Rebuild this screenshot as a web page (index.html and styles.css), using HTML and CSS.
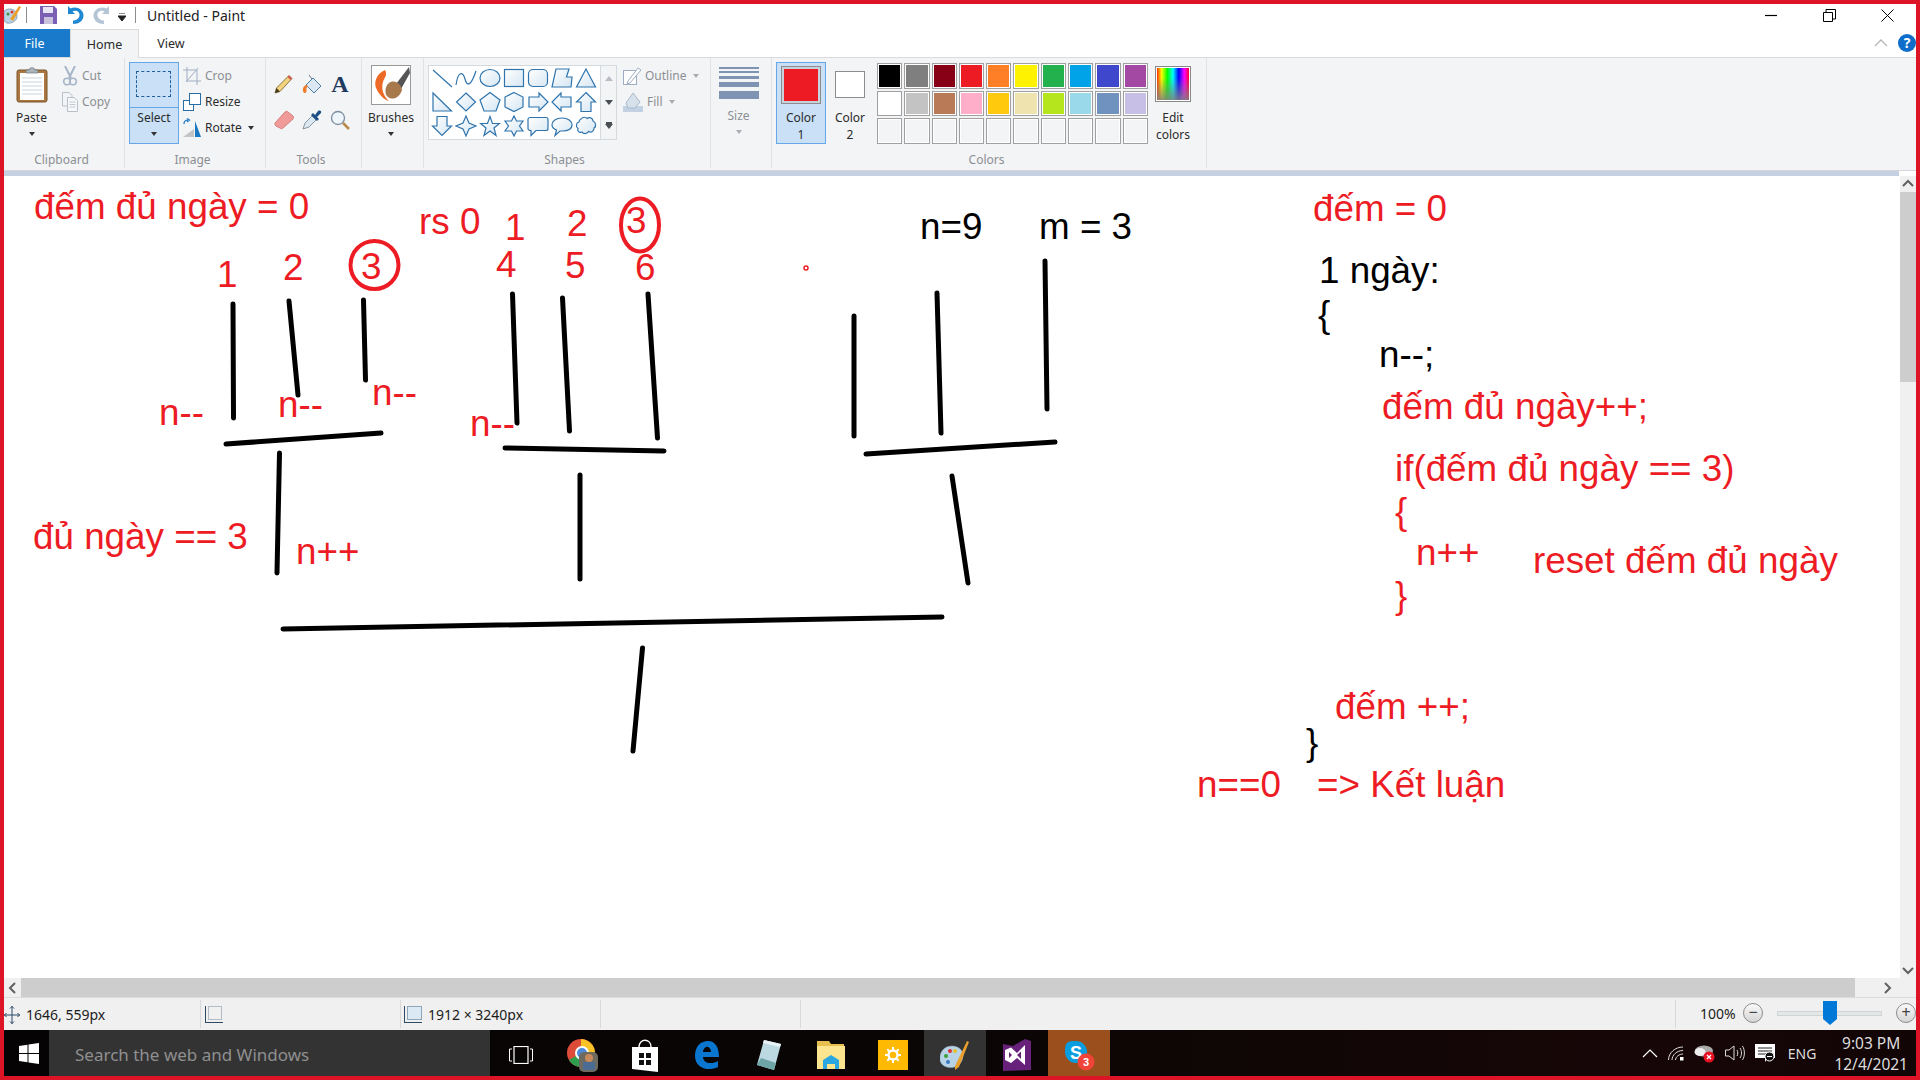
FILE: index.html
```html
<!DOCTYPE html>
<html lang="en">
<head>
    <meta charset="UTF-8">
    <title>Untitled - Paint</title>
    <link rel="stylesheet" href="styles.css">
</head>
<body>
<div class="window">

    <!-- title bar -->
    <div class="titlebar">
        <svg class="ic-app" width="18" height="22" viewBox="0 0 18 22"><path d="M0 7C5 3 12 5 13 11C14 17 7 20 3 19C0 18 0 16 0 15Z" fill="#b9d3e6" stroke="#6d8ca3" stroke-width=".7"/><path d="M6 15L15 2L17 3L9 17Z" fill="#e9a02e"/><circle cx="4" cy="10" r="1.5" fill="#3c8f3c"/><circle cx="8" cy="8" r="1.5" fill="#d33"/></svg>
        <span class="qa-sep"></span>
        <svg class="qa-save" width="17" height="18" viewBox="0 0 17 18"><path d="M0 0H14L17 3V18H0Z" fill="#7b5fb5"/><rect x="3" y="1" width="10" height="6" fill="#e9e6f4"/><rect x="4" y="11" width="9" height="7" fill="#c9c3dc"/></svg>
        <svg class="qa-undo" width="17" height="20" viewBox="0 0 17 20"><path d="M1 1V9H8L5.5 6.500C9 4.500 13 7 12.500 10.500C12 14 9 15.500 6 15.500V19C12 19 16.500 15.500 16.500 10.500C16.500 4 9 0.500 3.500 3.500Z" fill="#1e88d2"/></svg>
        <svg class="qa-redo" width="17" height="20" viewBox="0 0 17 20"><path d="M16 1V9H9L11.500 6.500C8 4.500 4 7 4.500 10.500C5 14 8 15.500 11 15.500V19C5 19 .5 15.500 .5 10.500C.5 4 8 0.500 13.500 3.500Z" fill="#b4c6d6"/></svg>
        <svg class="qa-more" width="8" height="8" viewBox="0 0 8 8"><path d="M1 0H7M0 3H8L4 8Z" stroke="#222" stroke-width="1" fill="#222"/></svg>
        <span class="qa-sep qa-sep-end"></span>
        <span class="title">Untitled - Paint</span>
        <div class="win-controls">
            <svg width="13" height="13" viewBox="0 0 13 13"><path d="M0 6.500H12" stroke="#000" stroke-width="1.200"/></svg>
            <svg width="13" height="13" viewBox="0 0 13 13"><path d="M.5 3.500H9.500V12.500H.5ZM3 3.500V.5H12.500V10H9.500" fill="none" stroke="#000"/></svg>
            <svg width="13" height="13" viewBox="0 0 13 13"><path d="M.5 .5L12.500 12.500M12.500 .5L.5 12.500" stroke="#000"/></svg>
        </div>
    </div>

    <!-- tabs -->
    <div class="tabs">
        <div class="tab tab-file">File</div>
        <div class="tab tab-home">Home</div>
        <div class="tab tab-view">View</div>
        <div class="tabs-right">
            <svg width="14" height="8" viewBox="0 0 14 8"><path d="M1 7L7 1L13 7" fill="none" stroke="#b5b5b5" stroke-width="1.300"/></svg>
            <span class="help">?</span>
        </div>
    </div>

    <!-- ribbon -->
    <div class="ribbon">

        <section class="group group-clipboard">
            <div class="group-body">
                <div class="big-btn paste-btn">
                    <svg width="32" height="36" viewBox="0 0 32 36"><rect x="1" y="3" width="30" height="32" rx="2" fill="#a9773f" stroke="#7d5427"/><rect x="4" y="6" width="24" height="27" fill="#fff"/><path d="M6 11H26M6 15H26M6 19H26M6 23H26M6 27H26" stroke="#c9d3df"/><path d="M10 6V3H13C13 0 19 0 19 3H22V6Z" fill="#aab2ba" stroke="#6f767d" stroke-width=".7"/></svg>
                    <span class="btn-label">Paste</span>
                    <i class="caret"></i>
                </div>
                <div class="small-col">
                    <div class="small-btn off">
                        <svg width="16" height="20" viewBox="0 0 16 20"><path d="M3 0L9 12M13 0L7 12" stroke="#a7b6c8" stroke-width="2"/><circle cx="5" cy="15.500" r="3.300" fill="none" stroke="#a7b6c8" stroke-width="1.600"/><circle cx="11" cy="15.500" r="3.300" fill="none" stroke="#a7b6c8" stroke-width="1.600"/></svg>
                        <span>Cut</span>
                    </div>
                    <div class="small-btn off">
                        <svg width="16" height="20" viewBox="0 0 16 20"><path d="M.5 .5H7L10 3.500V14H.5Z" fill="#f2f4f7" stroke="#b7c0cb"/><path d="M5.500 5.500H12L15.500 8.500V19.500H5.500Z" fill="#f7f8fa" stroke="#b7c0cb"/><path d="M7.500 10H13.500M7.500 12.500H13.500M7.500 15H13.500" stroke="#c3cad3"/></svg>
                        <span>Copy</span>
                    </div>
                </div>
            </div>
            <div class="group-label">Clipboard</div>
        </section>

        <section class="group group-image">
            <div class="group-body">
                <div class="select-btn">
                    <div class="select-top"><span class="marquee"></span></div>
                    <div class="select-bottom">
                        <span class="btn-label">Select</span>
                        <i class="caret"></i>
                    </div>
                </div>
                <div class="small-col">
                    <div class="small-btn off">
                        <svg width="18" height="20" viewBox="0 0 18 20"><path d="M4 1V15H18M0 4H14V19M3 16L15 2" fill="none" stroke="#9eaec2"/></svg>
                        <span>Crop</span>
                    </div>
                    <div class="small-btn">
                        <svg width="18" height="18" viewBox="0 0 18 18"><rect x=".5" y="7.500" width="10" height="10" fill="#fff" stroke="#2a6ea6"/><rect x="6.500" y=".5" width="11" height="11" fill="#fff" stroke="#2a6ea6"/></svg>
                        <span>Resize</span>
                    </div>
                    <div class="small-btn">
                        <svg width="18" height="20" viewBox="0 0 18 20"><path d="M0 19L11 11V19Z" fill="#c4c4c4"/><path d="M12 3L18 19H12Z" fill="#1a78c2"/><path d="M1 6C1 3 3 2 5 2M4 .5L6.500 2L4 4" fill="none" stroke="#1a78c2" stroke-width="1.200"/></svg>
                        <span>Rotate</span>
                        <i class="caret caret-side"></i>
                    </div>
                </div>
            </div>
            <div class="group-label">Image</div>
        </section>

        <section class="group group-tools">
            <div class="group-body tools-grid">
                <svg width="20" height="20" viewBox="0 0 20 20"><path d="M1 19L2.500 14L15 1.500L18 4.500L6 17.500Z" fill="#f2d27a" stroke="#6b5a2a" stroke-width=".8"/><path d="M15 1.500L18 4.500L16.500 6L13.500 3Z" fill="#d9534f"/><path d="M1 19L2.500 14L6 17.500Z" fill="#4a3b22"/></svg>
                <svg width="20" height="20" viewBox="0 0 20 20"><path d="M4 11L11 4L19 12L12 19Z" fill="#dbe7f2" stroke="#4f7fa8"/><path d="M10 5L7 1" stroke="#777"/><path d="M4 11C0 12 0 19 3 19C6 19 3 14 6 12Z" fill="#ef7d2d"/></svg>
                <span class="tool-text">A</span>
                <svg width="20" height="20" viewBox="0 0 20 20"><path d="M1 13L11 2C12 1 13 1 14 2L19 6C20 7 20 8 19 9L9 18C8 19 7 19 6 18L2 16C1 15 .5 14 1 13Z" fill="#f09a9a" stroke="#d47d7d"/></svg>
                <svg width="20" height="20" viewBox="0 0 20 20"><path d="M1 19L3 13L10 6L14 10L7 17Z" fill="#dce7ef" stroke="#6b8192" stroke-width=".8"/><path d="M9 5L15 11L17 9L15 7L19 3C20 1 18 0 16 1L13 5L11 3Z" fill="#1d4f86"/></svg>
                <svg width="20" height="20" viewBox="0 0 20 20"><circle cx="8" cy="8" r="6.500" fill="#eef5fb" stroke="#7c8ea0" stroke-width="1.300"/><path d="M13 13L19 19" stroke="#b88a4a" stroke-width="2.500"/></svg>
            </div>
            <div class="group-label">Tools</div>
        </section>

        <section class="group group-brushes">
            <div class="group-body">
                <div class="big-btn">
                    <svg class="brush-thumb" width="40" height="40" viewBox="0 0 40 40"><rect x=".5" y=".5" width="39" height="39" fill="#fff" stroke="#999"/><path d="M38 2L25 19L30 24L39 8Z" fill="#555"/><path d="M18 18C24 14 30 19 31 25C29 32 22 36 17 32C13 29 14 21 18 18Z" fill="#a8794a"/><path d="M14 5C5 9 2 18 6 25C9 31 14 35 18 36C12 31 10 23 12 17C13 13 17 10 14 5Z" fill="#ec6a25"/></svg>
                    <span class="btn-label">Brushes</span>
                    <i class="caret"></i>
                </div>
            </div>
            <div class="group-label"></div>
        </section>

        <section class="group group-shapes">
            <div class="group-body">
                <svg class="defs" width="0" height="0"><defs><linearGradient id="sf" x1="0" y1="0" x2="1" y2="1"><stop offset="0" stop-color="#fff"/><stop offset="1" stop-color="#d5e6f3"/></linearGradient></defs></svg>
                <div class="shape-box">
                    <div class="shape-grid">
                        <svg viewBox="0 0 22 22"><path d="M2 3L21 20"/></svg>
                        <svg viewBox="0 0 22 22"><path class="open" d="M1 18C3 4 8 4 10 12S16 19 21 4"/></svg>
                        <svg viewBox="0 0 22 22"><ellipse cx="11" cy="11" rx="10" ry="8.500"/></svg>
                        <svg viewBox="0 0 22 22"><rect x="1.500" y="2.500" width="19" height="17"/></svg>
                        <svg viewBox="0 0 22 22"><rect x="1.500" y="2.500" width="19" height="17" rx="4.500"/></svg>
                        <svg viewBox="0 0 22 22"><path d="M5 2H18L15.500 10H21L20 20H1Z"/></svg>
                        <svg viewBox="0 0 22 22"><path d="M11 2L20.500 20H1.500Z"/></svg>
                        <svg viewBox="0 0 22 22"><path d="M2 2L20.500 20H2Z"/></svg>
                        <svg viewBox="0 0 22 22"><path d="M11 2L20.500 11L11 20L1.500 11Z"/></svg>
                        <svg viewBox="0 0 22 22"><path d="M11 1.500L21 9L17 20H5L1 9Z"/></svg>
                        <svg viewBox="0 0 22 22"><path d="M11 1.500L20 6V16L11 20.500L2 16V6Z"/></svg>
                        <svg viewBox="0 0 22 22"><path d="M2 6H12V2L21 11L12 20V16H2Z"/></svg>
                        <svg viewBox="0 0 22 22"><path d="M20 6H10V2L1 11L10 20V16H20Z"/></svg>
                        <svg viewBox="0 0 22 22"><path d="M11 1.500L20.500 11H16V20.500H6V11H1.500Z"/></svg>
                        <svg viewBox="0 0 22 22"><path d="M6 1.500H16V11H20.500L11 20.500L1.500 11H6Z"/></svg>
                        <svg viewBox="0 0 22 22"><path d="M11 1L14 8L21 11L14 14L11 21L8 14L1 11L8 8Z"/></svg>
                        <svg viewBox="0 0 22 22"><path d="M11 1.500L13.500 8.500H20.500L15 13L17 20.500L11 16L5 20.500L7 13L1.500 8.500H8.500Z"/></svg>
                        <svg viewBox="0 0 22 22"><path d="M11 1L13.500 6H20L16.500 11L20 16H13.500L11 21L8.500 16H2L5.500 11L2 6H8.500Z"/></svg>
                        <svg viewBox="0 0 22 22"><path d="M3 2.500H19C20 2.500 21 3.500 21 4.500V13.500C21 14.500 20 15.500 19 15.500H9L4 20.500V15.500H3C2 15.500 1 14.500 1 13.500V4.500C1 3.500 2 2.500 3 2.500Z"/></svg>
                        <svg viewBox="0 0 22 22"><path d="M11 3C17 3 21 6 21 10S17 16 11 16H9L4 20.500L5.500 15C3 14 1 12.500 1 10C1 6 5 3 11 3Z"/></svg>
                        <svg viewBox="0 0 22 22"><path d="M6 4C8 1.500 11 2 12 3.500C14 1.500 18 3 18 6C21 7 21.500 12 19 13C19.500 16 16 18 13.500 16.500C12 19.500 8 19 7 17C4 18.500 2 15.500 3 13.500C.5 12 1 7.500 4 7C4 5.500 5 4.500 6 4Z"/></svg>
                    </div>
                    <div class="shape-scroll">
                        <i class="tri-up"></i>
                        <i class="tri-down"></i>
                        <i class="tri-more"></i>
                    </div>
                </div>
                <div class="small-col small-col-shape">
                    <div class="small-btn off">
                        <svg width="18" height="18" viewBox="0 0 18 18"><rect x=".5" y="3.500" width="13" height="14" fill="#fff" stroke="#9eaec2"/><path d="M5 14L15 1L18 3L7 16L4 17Z" fill="#fff" stroke="#9eaec2"/></svg>
                        <span>Outline</span>
                        <i class="caret caret-side caret-off"></i>
                    </div>
                    <div class="small-btn off">
                        <svg width="20" height="20" viewBox="0 0 20 20"><rect x="0" y="14" width="20" height="6" fill="#c3d2e2"/><path d="M3 11L10 1L17 10L12 16H5Z" fill="#d6e1ec" stroke="#a9b9ca"/></svg>
                        <span>Fill</span>
                        <i class="caret caret-side caret-off"></i>
                    </div>
                </div>
            </div>
            <div class="group-label">Shapes</div>
        </section>

        <section class="group group-size">
            <div class="group-body">
                <div class="big-btn size-btn">
                    <div class="size-lines">
                        <span class="w1"></span><span class="w2"></span><span class="w3"></span><span class="w4"></span><span class="w5"></span>
                    </div>
                    <span class="btn-label off-text">Size</span>
                    <i class="caret caret-off"></i>
                </div>
            </div>
            <div class="group-label"></div>
        </section>

        <section class="group group-colors">
            <div class="group-body">
                <div class="color-btn color-on">
                    <span class="swatch-frame"><span class="swatch swatch-red"></span></span>
                    <span class="btn-label">Color<br>1</span>
                </div>
                <div class="color-btn color-two">
                    <span class="swatch swatch-white"></span>
                    <span class="btn-label">Color<br>2</span>
                </div>
                <div class="palette">
                    <span class="c01"></span><span class="c02"></span><span class="c03"></span><span class="c04"></span><span class="c05"></span><span class="c06"></span><span class="c07"></span><span class="c08"></span><span class="c09"></span><span class="c10"></span>
                    <span class="c11"></span><span class="c12"></span><span class="c13"></span><span class="c14"></span><span class="c15"></span><span class="c16"></span><span class="c17"></span><span class="c18"></span><span class="c19"></span><span class="c20"></span>
                    <span></span><span></span><span></span><span></span><span></span><span></span><span></span><span></span><span></span><span></span>
                </div>
                <div class="edit-colors">
                    <span class="rainbow"></span>
                    <span class="btn-label">Edit<br>colors</span>
                </div>
            </div>
            <div class="group-label">Colors</div>
        </section>
    </div>

    <div class="strip"></div>

    <!-- canvas, free drawing so everything is placed by coordinates -->
    <div class="canvas-row">
        <svg class="canvas" width="1896" height="802" viewBox="4 176 1896 802">
            <g class="strokes">
                <path d="M233 304L233.500 418"/>
                <path d="M289 301L298 395"/>
                <path d="M363.500 300L365.500 380"/>
                <path d="M226 444L381 433"/>
                <path d="M279.500 453L277 573"/>
                <path d="M512.500 294L517 423"/>
                <path d="M562.500 298L569.500 431"/>
                <path d="M648 294L657.500 438"/>
                <path d="M505 448L664 451"/>
                <path d="M580 475V579"/>
                <path d="M854 316V436"/>
                <path d="M937 293L941 433"/>
                <path d="M1045 261L1047 409"/>
                <path d="M866 454L1055 442"/>
                <path d="M952 476L968 583"/>
                <path d="M283 629L942 617"/>
                <path d="M642.500 648L633 751"/>
            </g>
            <g class="circles">
                <ellipse cx="374.500" cy="265" rx="24" ry="24"/>
                <ellipse cx="640" cy="225" rx="19" ry="26.500"/>
                <circle class="speck" cx="806" cy="268" r="2"/>
            </g>
            <g class="pen-red">
                <text x="34" y="219">đếm đủ ngày = 0</text>
                <text x="419" y="234">rs 0</text>
                <text x="505" y="240">1</text>
                <text x="567" y="236">2</text>
                <text x="626" y="233">3</text>
                <text x="217" y="287">1</text>
                <text x="283" y="280">2</text>
                <text x="361" y="279">3</text>
                <text x="496" y="277">4</text>
                <text x="565" y="278">5</text>
                <text x="635" y="280">6</text>
                <text x="159" y="425">n--</text>
                <text x="278" y="417">n--</text>
                <text x="372" y="405">n--</text>
                <text x="470" y="436">n--</text>
                <text x="33" y="549">đủ ngày == 3</text>
                <text x="296" y="564">n++</text>
                <text x="1313" y="221">đếm = 0</text>
                <text x="1382" y="419">đếm đủ ngày++;</text>
                <text x="1395" y="481">if(đếm đủ ngày == 3)</text>
                <text x="1395" y="524">{</text>
                <text x="1416" y="565">n++</text>
                <text x="1533" y="573">reset đếm đủ ngày</text>
                <text x="1395" y="608">}</text>
                <text x="1335" y="719">đếm ++;</text>
                <text x="1197" y="797">n==0</text>
                <text x="1317" y="797">=&gt; Kết luận</text>
            </g>
            <g class="pen-black">
                <text x="920" y="239">n=9</text>
                <text x="1039" y="239">m = 3</text>
                <text x="1319" y="283">1 ngày:</text>
                <text x="1318" y="327">{</text>
                <text x="1379" y="367">n--;</text>
                <text x="1306" y="755">}</text>
            </g>
        </svg>
        <div class="vscroll">
            <svg class="arrow" width="16" height="16" viewBox="0 0 16 16"><path d="M3 10L8 5L13 10" fill="none" stroke="#606060" stroke-width="2"/></svg>
            <div class="vthumb"></div>
            <div class="vtrack"></div>
            <svg class="arrow" width="16" height="16" viewBox="0 0 16 16"><path d="M3 6L8 11L13 6" fill="none" stroke="#606060" stroke-width="2"/></svg>
        </div>
    </div>

    <div class="hscroll">
        <svg class="arrow-h" width="17" height="19" viewBox="0 0 17 19"><path d="M11 5L6 10L11 15" fill="none" stroke="#606060" stroke-width="2"/></svg>
        <div class="hthumb"></div>
        <svg class="arrow-h arrow-right" width="17" height="19" viewBox="0 0 17 19"><path d="M6 5L11 10L6 15" fill="none" stroke="#606060" stroke-width="2"/></svg>
    </div>

    <!-- status bar -->
    <div class="status">
        <div class="cell cell-pos">
            <svg width="16" height="18" viewBox="0 0 16 18"><path d="M8 0V18M0 9H16M6 2.500L8 .5L10 2.500M6 15.500L8 17.500L10 15.500M2.500 7L.5 9L2.500 11M13.500 7L15.500 9L13.500 11" fill="none" stroke="#2c4a66"/></svg>
            <span>1646, 559px</span>
        </div>
        <div class="cell cell-sel">
            <svg width="18" height="18" viewBox="0 0 18 18"><path d="M.5 0V17M0 16.500H18" stroke="#2c4a66"/><rect x="3.500" y=".5" width="13" height="13" fill="none" stroke="#7b8794" stroke-dasharray="1 1"/></svg>
        </div>
        <div class="cell cell-size">
            <svg width="18" height="18" viewBox="0 0 18 18"><path d="M.5 0V17M0 16.500H18" stroke="#2c4a66"/><rect x="3.500" y=".5" width="14" height="13" fill="#dbe9f4" stroke="#8fa5b8"/></svg>
            <span>1912 × 3240px</span>
        </div>
        <div class="cell cell-wide"></div>
        <div class="cell cell-rest"></div>
        <div class="zoom">
            <span class="zoom-value">100%</span>
            <span class="zoom-btn">−</span>
            <div class="zoom-track"><svg class="zoom-thumb" width="14" height="24" viewBox="0 0 14 24"><path d="M0 0H14V18L7 24L0 18Z" fill="#0078d7"/></svg></div>
            <span class="zoom-btn">+</span>
        </div>
    </div>

    <!-- taskbar -->
    <div class="taskbar">
        <div class="start">
            <svg width="20" height="21" viewBox="0 0 20 21"><path d="M0 3L8.500 1.800V10H0ZM9.500 1.600L20 0V10H9.500ZM0 11H8.500V19.200L0 18ZM9.500 11H20V21L9.500 19.400Z" fill="#fff"/></svg>
        </div>
        <div class="search">Search the web and Windows</div>
        <div class="task">
            <svg width="24" height="18" viewBox="0 0 24 18"><rect x="5" y=".5" width="14" height="17" fill="none" stroke="#fff" stroke-width="1.200"/><path d="M3 3H.5V15H3M21 3H23.500V15H21" fill="none" stroke="#fff"/></svg>
        </div>
        <div class="task">
            <svg width="32" height="34" viewBox="0 0 32 34"><circle cx="14" cy="15" r="14" fill="#dd4b39"/><path d="M14 15L2 22A14 14 0 0 0 14 29Z" fill="#2e9e4f"/><path d="M14 1A14 14 0 0 1 27 20L14 15Z" fill="#f7c325"/><circle cx="15" cy="15" r="6" fill="#4a89dc" stroke="#fff" stroke-width="2"/><rect x="12" y="14" width="19" height="20" rx="5" fill="#6d6a5f"/><circle cx="22" cy="20" r="4" fill="#c98a5b"/><rect x="16" y="24" width="12" height="8" fill="#4c6c93"/></svg>
        </div>
        <div class="task">
            <svg width="26" height="34" viewBox="0 0 26 34"><path d="M7 9C7 0 19 0 19 9" fill="none" stroke="#fff" stroke-width="1.400"/><path d="M0 9H26V34L0 31Z" fill="#fff"/><path d="M7 15H12V20H7ZM14 15H19V20H14ZM7 22H12V27H7ZM14 22H19V27H14Z" fill="#111"/></svg>
        </div>
        <div class="task">
            <svg width="26" height="30" viewBox="0 0 26 30"><path d="M1 16C1 6 7 1 14 1C21 1 25 7 25 17H9C9 23 17 25 24 21V27C14 32 1 28 1 16ZM9 12H17C17 8 14 6 12 7C10 8 9 10 9 12Z" fill="#0b76d0"/></svg>
        </div>
        <div class="task">
            <svg width="26" height="32" viewBox="0 0 26 32"><path d="M8 1L25 5L18 31L1 26Z" fill="#bcd9e2"/><path d="M1 26L18 31L20 24L5 19Z" fill="#6ea5a6"/><path d="M8 1L25 5L24 8L7 4Z" fill="#e8f2f3"/></svg>
        </div>
        <div class="task">
            <svg width="28" height="30" viewBox="0 0 28 30"><path d="M0 1H12L14 4H27V29H0Z" fill="#e6bf4f"/><path d="M0 6H28V29H0Z" fill="#fde58f"/><path d="M6 29V20L14 15L22 20V29H18V24H10V29Z" fill="#2ba6e0"/></svg>
        </div>
        <div class="task">
            <span class="tile">
                <svg width="16" height="16" viewBox="0 0 16 16"><circle cx="8" cy="8" r="4.500" fill="none" stroke="#fff" stroke-width="2.400"/><path d="M8 0V3M8 13V16M0 8H3M13 8H16M2.300 2.300L4.500 4.500M11.500 11.500L13.700 13.700M2.300 13.700L4.500 11.500M11.500 4.500L13.700 2.300" stroke="#fff" stroke-width="2"/></svg>
            </span>
        </div>
        <div class="task task-active">
            <svg width="30" height="32" viewBox="0 0 30 32"><path d="M0 17C2 7 12 5 19 9C25 13 24 23 17 27C9 31 -2 27 0 17Z" fill="#b9d3e6" stroke="#8aa5b8" stroke-width=".6"/><path d="M15 27L27 2L29 3L19 28L15 31Z" fill="#e9a02e"/><circle cx="6" cy="17" r="2" fill="#3c9f3c"/><circle cx="10" cy="12" r="2" fill="#d33"/><circle cx="15" cy="12" r="2" fill="#e4c22c"/><circle cx="8" cy="23" r="2" fill="#3a7ac2"/></svg>
        </div>
        <div class="task">
            <svg width="28" height="32" viewBox="0 0 28 32"><path d="M0 5L10 7L22 0L28 2V31L0 32Z" fill="#68217a"/><path d="M2 11L8 8.500L14 14L22 6V26L14 19L8 24L2 21ZM6 13V19L9 16ZM18 12.500L14 16L18 20Z" fill="#fff"/></svg>
        </div>
        <div class="task task-alert">
            <svg width="32" height="32" viewBox="0 0 32 32"><circle cx="9" cy="9" r="7" fill="#0a9ee0"/><circle cx="17" cy="17" r="7" fill="#0a9ee0"/><rect x="2" y="2" width="22" height="22" rx="11" fill="#0a9ee0"/><text x="13" y="20" class="skype-s">S</text><circle cx="23" cy="23" r="8.500" fill="#f04438"/><text x="23" y="27" class="skype-count">3</text></svg>
        </div>
        <div class="tray">
            <svg width="16" height="9" viewBox="0 0 16 9"><path d="M1 8L8 1L15 8" fill="none" stroke="#fff" stroke-width="1.200"/></svg>
            <svg width="16" height="15" viewBox="0 0 16 15"><path d="M.5 14C.5 7 7 1 15 1M4 14C4 9 9 4.500 15 4.500M7.500 14C7.500 11 11 8 15 8" fill="none" stroke="#ddd"/><rect x="12" y="11" width="3.500" height="3.500" fill="#fff"/></svg>
            <svg width="21" height="19" viewBox="0 0 21 19"><ellipse cx="10" cy="7" rx="9" ry="5.500" fill="#aaa"/><ellipse cx="6" cy="8" rx="5.500" ry="4" fill="#eee"/><circle cx="15" cy="13" r="5.500" fill="#e81123"/><path d="M13 11L17 15M17 11L13 15" stroke="#fff" stroke-width="1.300"/></svg>
            <svg width="20" height="16" viewBox="0 0 20 16"><path d="M.5 5H4L9 1V15L4 11H.5Z" fill="none" stroke="#ddd"/><path d="M12 5C13 7 13 9 12 11M15 3C17 6 17 10 15 13M17.500 1C20 5 20 11 17.500 15" fill="none" stroke="#ddd"/></svg>
            <svg width="20" height="18" viewBox="0 0 20 18"><path d="M0 0H20V14H13L10 18V14H0Z" fill="#fff"/><path d="M3 4H17M3 7H17M3 10H11" stroke="#222"/><circle cx="14.500" cy="12.500" r="4.500" fill="#111" stroke="#fff"/><path d="M12 12.500H17" stroke="#fff"/></svg>
            <span class="lang">ENG</span>
            <div class="clock"><span>9:03 PM</span><span>12/4/2021</span></div>
        </div>
    </div>
</div>
</body>
</html>
```

FILE: styles.css
```css
* {
    margin: 0;
    padding: 0;
    box-sizing: border-box;
}

body {
    font-family: 'Noto Sans', 'Open Sans', sans-serif;
    font-size: 12px;
    color: #2b2b2b;
    background: #fff;
}

.window {
    width: 1920px;
    height: 1080px;
    border: 4px solid #dc1426;
    display: flex;
    flex-direction: column;
    overflow: hidden;
    background: #fff;
}

/* title bar */
.titlebar {
    height: 25px;
    display: flex;
    align-items: center;
    flex-shrink: 0;
    padding-bottom: 3px;
}

.qa-sep {
    width: 1px;
    height: 16px;
    background: #8c8c8c;
    margin-left: 4px;
}

.qa-save {
    margin-left: 13px;
}

.qa-undo {
    margin-left: 10px;
}

.qa-redo {
    margin-left: 9px;
}

.qa-more {
    margin-left: 8px;
    margin-top: 3px;
}

.qa-sep-end {
    margin-left: 9px;
}

.title {
    margin-left: 11px;
    font-size: 14px;
    color: #222;
}

.win-controls {
    margin-left: auto;
    margin-right: 22px;
    display: flex;
    gap: 45px;
}

/* tabs */
.tabs {
    height: 29px;
    display: flex;
    flex-shrink: 0;
    border-bottom: 1px solid #dadbdc;
    font-size: 12.500px;
}

.tab {
    display: flex;
    align-items: center;
    justify-content: center;
}

.tab-file {
    width: 66px;
    background: #1979ca;
    color: #fff;
    padding-right: 5px;
}

.tab-home {
    width: 69px;
    border: 1px solid #dadbdc;
    border-bottom: none;
    background: #f3f4f6;
    margin-bottom: -1px;
}

.tab-view {
    width: 69px;
    padding-right: 5px;
}

.tabs-right {
    margin-left: auto;
    display: flex;
    align-items: center;
    gap: 10px;
}

.help {
    width: 18px;
    height: 18px;
    border-radius: 50%;
    background: #0f6cc9;
    color: #fff;
    font-weight: bold;
    font-size: 14px;
    line-height: 18px;
    text-align: center;
}

/* ribbon */
.ribbon {
    height: 113px;
    display: flex;
    flex-shrink: 0;
    background: #f3f4f6;
    border-bottom: 1px solid #d5d7da;
}

.group {
    display: flex;
    flex-direction: column;
    padding-top: 4px;
    border-right: 1px solid #dfe1e4;
    height: 110px;
}

.group-body {
    height: 90px;
    display: flex;
}

.group-label {
    height: 16px;
    line-height: 16px;
    text-align: center;
    padding-right: 5px;
    color: #8b8f94;
}

.group-clipboard {
    width: 121px;
}

.group-image {
    width: 141px;
}

.group-tools {
    width: 96px;
}

.group-brushes {
    width: 62px;
}

.group-shapes {
    width: 287px;
}

.group-size {
    width: 61px;
}

.group-colors {
    width: 435px;
}

.btn-label {
    line-height: 17px;
    text-align: center;
    color: #2b2b2b;
}

.off-text {
    color: #8b8f94;
}

.caret {
    display: block;
    width: 0;
    height: 0;
    border-left: 3.500px solid transparent;
    border-right: 3.500px solid transparent;
    border-top: 4px solid #333;
    margin-top: 6px;
}

.caret-side {
    margin-top: 0;
    margin-left: 2px;
}

.caret-off {
    border-top-color: #a9adb2;
}

.big-btn {
    display: flex;
    flex-direction: column;
    align-items: center;
    padding-top: 5px;
}

.big-btn .btn-label {
    margin-top: 3px;
}

.paste-btn {
    width: 55px;
}

.paste-btn svg {
    margin-bottom: 3px;
}

.small-col {
    display: flex;
    flex-direction: column;
    gap: 5px;
    padding-top: 3px;
}

.small-btn {
    height: 21px;
    display: flex;
    align-items: center;
    gap: 4px;
    color: #2b2b2b;
}

.small-btn svg {
    flex-shrink: 0;
}

.small-btn.off {
    color: #8b8f94;
}

.group-clipboard .small-col {
    gap: 5px;
    margin-left: 3px;
}

/* select */
.group-image .group-body {
    padding-left: 4px;
}

.select-btn {
    width: 50px;
    height: 82px;
    background: #c9e0f7;
    border: 1px solid #66a7e8;
    display: flex;
    flex-direction: column;
    margin-right: 4px;
}

.select-top {
    height: 45px;
    border-bottom: 1px solid #66a7e8;
    padding: 8px 0 0 6px;
}

.marquee {
    display: block;
    width: 35px;
    height: 26px;
    border: 1px dashed #1d5f9e;
}

.select-bottom {
    display: flex;
    flex-direction: column;
    align-items: center;
    padding-top: 1px;
}

/* tools */
.tools-grid {
    display: grid;
    grid-template-columns: repeat(3, 20px);
    grid-template-rows: 20px 20px;
    column-gap: 8px;
    row-gap: 16px;
    padding: 12px 0 0 8px;
}

.tool-text {
    font-family: 'Liberation Serif', serif;
    font-size: 24px;
    font-weight: bold;
    line-height: 20px;
    color: #1f3a5f;
    text-align: center;
}

/* brushes */
.group-brushes .big-btn {
    width: 100%;
    padding: 3px 3px 0 0;
}

.brush-thumb {
    margin-bottom: 1px;
}

/* shapes */
.defs {
    position: absolute;
}

.group-shapes .group-body {
    padding-left: 4px;
}

.shape-box {
    width: 189px;
    height: 75px;
    margin-top: 3px;
    display: flex;
    border: 1px solid #d5dadf;
    background: #fff;
}

.shape-grid {
    width: 171px;
    display: grid;
    grid-template-columns: repeat(7, 24px);
    grid-template-rows: repeat(3, 24px);
    padding: 0 0 0 1px;
    align-items: center;
    justify-items: center;
}

.shape-grid svg {
    width: 22px;
    height: 22px;
}

.shape-grid svg > * {
    fill: url(#sf);
    stroke: #2f74ad;
    stroke-width: 1.200;
}

.shape-grid svg > .open {
    fill: none;
}

.shape-scroll {
    flex: 1;
    background: #f3f4f6;
    border-left: 1px solid #d5dadf;
    display: flex;
    flex-direction: column;
    align-items: center;
    justify-content: space-around;
}

.tri-up {
    border-left: 4px solid transparent;
    border-right: 4px solid transparent;
    border-bottom: 5px solid #b8bcc2;
}

.tri-down {
    border-left: 4px solid transparent;
    border-right: 4px solid transparent;
    border-top: 5px solid #4a4f55;
}

.tri-more {
    border-left: 4px solid transparent;
    border-right: 4px solid transparent;
    border-top: 5px solid #4a4f55;
    box-shadow: 0 -3px 0 -1px #4a4f55;
}

.small-col-shape {
    margin-left: 6px;
    gap: 5px;
    padding-top: 3px;
}

/* size */
.size-btn {
    width: 100%;
    padding-right: 5px;
}

.size-lines {
    width: 40px;
    height: 34px;
    display: flex;
    flex-direction: column;
    margin-bottom: 3px;
}

.size-lines span {
    display: block;
    background: #7f93b2;
}

.w1 { height: 2px; margin-bottom: 2px; }
.w2 { height: 2px; margin-bottom: 3px; }
.w3 { height: 3px; margin-bottom: 3px; }
.w4 { height: 5px; margin-bottom: 4px; }
.w5 { height: 8px; }

/* colors */
.group-colors .group-body {
    padding-left: 4px;
}

.color-btn {
    width: 50px;
    height: 82px;
    border: 1px solid transparent;
    display: flex;
    flex-direction: column;
    align-items: center;
}

.color-on {
    background: #c9e0f7;
    border-color: #66a7e8;
}

.swatch-frame {
    width: 40px;
    height: 41px;
    margin-top: 3px;
    border: 1px solid #8c8c8c;
    padding: 2px;
    background: #c9d3de;
    margin-bottom: 5px;
}

.swatch {
    display: block;
}

.swatch-red {
    width: 100%;
    height: 100%;
    background: #ed1c24;
}

.swatch-white {
    width: 30px;
    height: 30px;
    margin-top: 8px;
    margin-bottom: 11px;
    background: #fff;
    border: 1px solid #8c8c8c;
}

.color-two {
    width: 44px;
    margin-left: 2px;
}

.palette {
    display: grid;
    grid-template-columns: repeat(10, 25.300px);
    grid-template-rows: repeat(3, 25.500px);
    gap: 2px;
    margin-left: 5px;
    margin-top: 1px;
}

.palette span {
    display: block;
    border: 1px solid #a0a0a0;
    box-shadow: inset 0 0 0 1px #fff;
}

.c01 { background: #000; }
.c02 { background: #7f7f7f; }
.c03 { background: #880015; }
.c04 { background: #ed1c24; }
.c05 { background: #ff7f27; }
.c06 { background: #fff200; }
.c07 { background: #22b14c; }
.c08 { background: #00a2e8; }
.c09 { background: #3f48cc; }
.c10 { background: #a349a4; }
.c11 { background: #fff; }
.c12 { background: #c3c3c3; }
.c13 { background: #b97a57; }
.c14 { background: #ffaec9; }
.c15 { background: #ffc90e; }
.c16 { background: #efe4b0; }
.c17 { background: #b5e61d; }
.c18 { background: #99d9ea; }
.c19 { background: #7092be; }
.c20 { background: #c8bfe7; }

.edit-colors {
    width: 42px;
    margin-left: 4px;
    display: flex;
    flex-direction: column;
    align-items: center;
}

.rainbow {
    display: block;
    width: 36px;
    height: 36px;
    margin-top: 4px;
    margin-bottom: 7px;
    border: 1px solid #888;
    box-shadow: inset 0 0 0 1px #fff;
    background: linear-gradient(180deg, rgba(255,255,255,0) 30%, rgba(128,128,128,0.9) 100%), linear-gradient(90deg, #f00, #ff0, #0f0, #0ff, #00f, #f0f, #f00);
}

/* canvas area */
.strip {
    height: 5px;
    width: 1895px;
    background: #c5d0e0;
    flex-shrink: 0;
}

.canvas-row {
    height: 802px;
    display: flex;
    flex-shrink: 0;
}

.canvas {
    display: block;
    background: #fff;
    flex-shrink: 0;
}

.strokes path {
    fill: none;
    stroke: #000;
    stroke-width: 5px;
    stroke-linecap: round;
}

.circles ellipse {
    fill: none;
    stroke: #ed1c24;
    stroke-width: 4px;
}

.speck {
    fill: #fff;
    stroke: #ed1c24;
    stroke-width: 1.500px;
}

.pen-red text,
.pen-black text {
    font-family: 'Liberation Sans', Arial, sans-serif;
    font-size: 36.800px;
}

.pen-red text {
    fill: #ed1c24;
}

.pen-black text {
    fill: #000;
}

.vscroll {
    width: 16px;
    height: 802px;
    display: flex;
    flex-direction: column;
    background: #f0f0f0;
}

.arrow {
    display: block;
    flex-shrink: 0;
}

.vthumb {
    height: 190px;
    background: #cdcdcd;
}

.vtrack {
    flex: 1;
}

.hscroll {
    height: 20px;
    flex-shrink: 0;
    display: flex;
    background: #f0f0f0;
    border-bottom: 1px solid #dcdcdc;
}

.arrow-h {
    flex-shrink: 0;
}

.hthumb {
    width: 1834px;
    background: #cdcdcd;
}

.arrow-right {
    margin-left: 24px;
}

/* status bar */
.status {
    height: 32px;
    flex-shrink: 0;
    display: flex;
    background: #f0f0f0;
    padding-top: 2px;
    font-size: 14px;
}

.cell {
    height: 28px;
    border-right: 1px solid #d9d9d9;
    display: flex;
    align-items: center;
    gap: 6px;
    padding-top: 1px;
    color: #1c1c1c;
}

.cell-pos {
    width: 197px;
}

.cell-sel {
    width: 200px;
    padding-left: 4px;
}

.cell-size {
    width: 200px;
    padding-left: 3px;
}

.cell-wide {
    width: 200px;
}

.cell-rest {
    width: 875px;
}

.zoom {
    flex: 1;
    display: flex;
    align-items: center;
    padding-bottom: 4px;
}

.zoom-value {
    margin-left: 24px;
    width: 43px;
    color: #1c1c1c;
}

.zoom-btn {
    width: 20px;
    height: 20px;
    border-radius: 50%;
    border: 1px solid #8c8c8c;
    background: linear-gradient(#fafafa, #d4d4d4);
    font-size: 16px;
    line-height: 17px;
    text-align: center;
    color: #444;
}

.zoom-track {
    position: relative;
    width: 105px;
    height: 5px;
    margin: 0 14px;
    background: #e2e8e8;
    border: 1px solid #d0d4d4;
}

.zoom-thumb {
    position: absolute;
    left: 45px;
    top: -11px;
}

/* taskbar */
.taskbar {
    height: 46px;
    flex-shrink: 0;
    display: flex;
    align-items: stretch;
    background: linear-gradient(90deg, #050303 0%, #0a0605 50%, #170607 85%, #120506 100%);
    color: #fff;
}

.start {
    width: 45px;
    display: flex;
    align-items: center;
    justify-content: center;
    padding-left: 4px;
}

.search {
    width: 441px;
    background: #333;
    color: #8f8f8f;
    font-size: 17px;
    line-height: 46px;
    padding: 2px 0 0 26px;
}

.task {
    width: 62px;
    display: flex;
    align-items: center;
    justify-content: center;
    flex-shrink: 0;
    padding-top: 4px;
}

.task-active {
    background: #333;
}

.task-alert {
    background: #9a4f1c;
}

.tile {
    width: 30px;
    height: 30px;
    background: #ffb900;
    display: flex;
    align-items: center;
    justify-content: center;
}

.skype-s {
    font-family: 'Liberation Sans', sans-serif;
    font-size: 18px;
    font-weight: bold;
    fill: #fff;
    text-anchor: middle;
}

.skype-count {
    font-family: 'Liberation Sans', sans-serif;
    font-size: 11px;
    font-weight: bold;
    fill: #fff;
    text-anchor: middle;
}

.tray {
    margin-left: auto;
    display: flex;
    align-items: center;
    gap: 10px;
    padding-right: 8px;
}

.lang {
    margin-left: 3px;
    font-size: 14px;
    color: #ddd;
}

.clock {
    display: flex;
    flex-direction: column;
    align-items: center;
    margin-left: 8px;
    padding-top: 2px;
    font-size: 15.500px;
    line-height: 21px;
    color: #ddd;
}
```
